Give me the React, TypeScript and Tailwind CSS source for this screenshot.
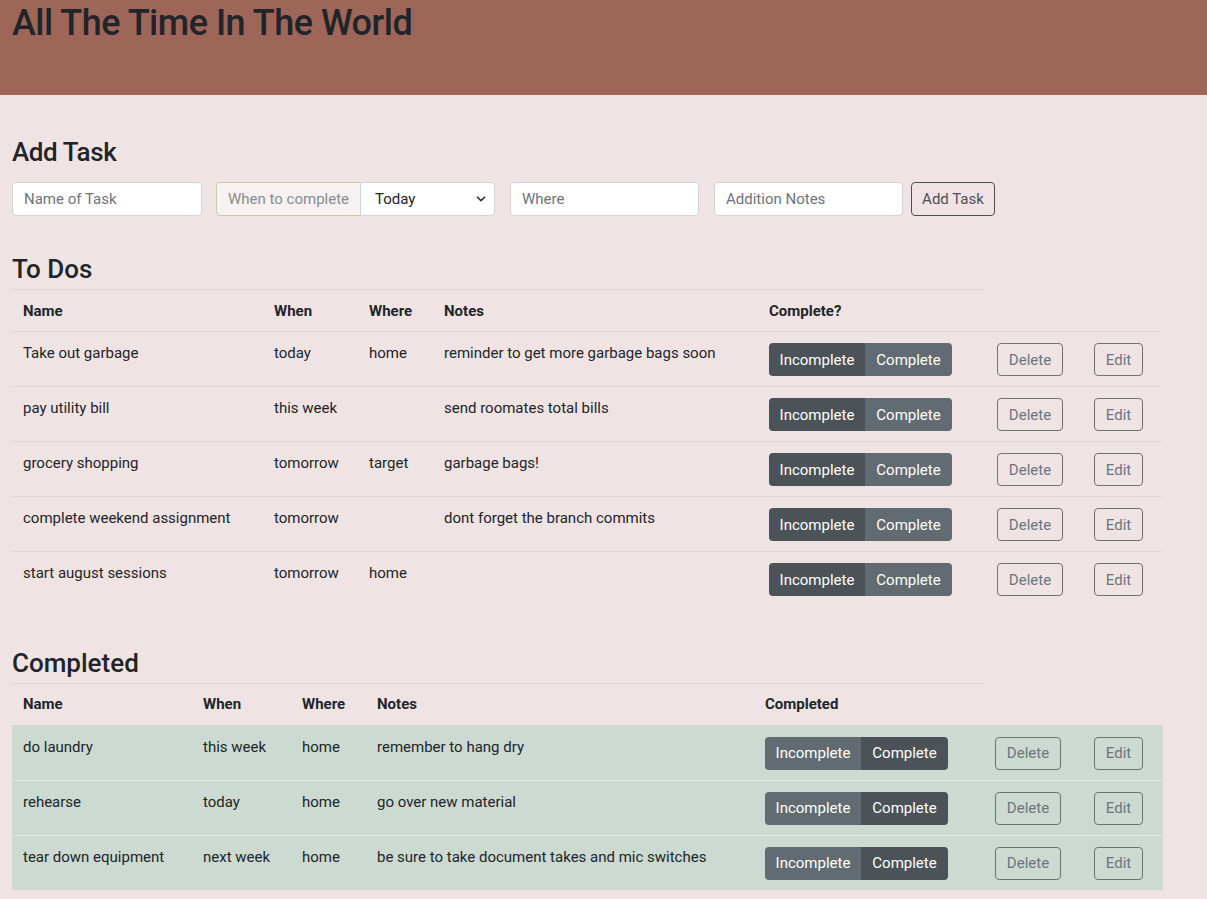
import { ChevronDown } from 'lucide-react';

type Task = { name: string; when: string; where: string; notes: string };

const todos: Task[] = [
  { name: 'Take out garbage', when: 'today', where: 'home', notes: 'reminder to get more garbage bags soon' },
  { name: 'pay utility bill', when: 'this week', where: '', notes: 'send roomates total bills' },
  { name: 'grocery shopping', when: 'tomorrow', where: 'target', notes: 'garbage bags!' },
  { name: 'complete weekend assignment', when: 'tomorrow', where: '', notes: 'dont forget the branch commits' },
  { name: 'start august sessions', when: 'tomorrow', where: 'home', notes: '' },
];

const completed: Task[] = [
  { name: 'do laundry', when: 'this week', where: 'home', notes: 'remember to hang dry' },
  { name: 'rehearse', when: 'today', where: 'home', notes: 'go over new material' },
  { name: 'tear down equipment', when: 'next week', where: 'home', notes: 'be sure to take document takes and mic switches' },
];

function StatusGroup({ done }: { done: boolean }) {
  const dark = 'bg-[#4b5258]';
  const light = 'bg-[#616b71]';
  return (
    <div className="mt-px inline-flex h-[33px] overflow-hidden rounded-[4px] text-white">
      <button className={`w-[96px] ${done ? light : dark}`}>Incomplete</button>
      <button className={`w-[87px] ${done ? dark : light}`}>Complete</button>
    </div>
  );
}

function OutlineButton({ label, width }: { label: string; width: string }) {
  return (
    <button className={`mt-px h-[33px] ${width} rounded-[4px] border border-[#6c7378] text-[#6c757d]`}>
      {label}
    </button>
  );
}

function TaskTable({
  tasks,
  widths,
  lastHeader,
  done,
}: {
  tasks: Task[];
  widths: string[];
  lastHeader: string;
  done: boolean;
}) {
  const cell = 'border-t px-[11px] pt-[10px] text-left align-top';
  const border = done ? 'border-[#dfe5e2]' : 'border-[#dcd8dc]';
  return (
    <table className="w-[1151px] table-fixed border-collapse">
      <colgroup>
        {widths.map((w, i) => (
          <col key={i} className={w} />
        ))}
      </colgroup>
      <thead>
        <tr className="h-[42px]">
          {['Name', 'When', 'Where', 'Notes', lastHeader].map((h) => (
            <th key={h} className="border-t border-[#dcd8dc] px-[11px] text-left align-middle font-bold">
              {h}
            </th>
          ))}
        </tr>
      </thead>
      <tbody>
        {tasks.map((t, i) => {
          const c = `${cell} ${i === 0 && done ? 'border-[#ccdad2]' : border}`;
          return (
            <tr key={i} className={`h-[55px] ${done ? 'bg-[#ccdad2]' : ''}`}>
              <td className={c}>{t.name}</td>
              <td className={c}>{t.when}</td>
              <td className={c}>{t.where}</td>
              <td className={c}>{t.notes}</td>
              <td className={c}>
                <StatusGroup done={done} />
              </td>
              <td className={c}>
                <OutlineButton label="Delete" width="w-[66px]" />
              </td>
              <td className={c}>
                <OutlineButton label="Edit" width="w-[49px]" />
              </td>
            </tr>
          );
        })}
      </tbody>
    </table>
  );
}

export default function App() {
  const input =
    'h-[34px] rounded-[4px] border border-[#ced4da] bg-white px-[11px] text-[#212529] placeholder:text-[#6c757d] outline-none';

  return (
    <div className="min-h-[899px] bg-[#efe4e3] font-['Roboto',sans-serif] text-[15px] leading-[22px] text-[#212529]">
      {/* Header */}
      <header className="h-[95px] bg-[#9e6659] px-3">
        <h1 className="text-[36px] leading-[47px] font-medium tracking-[-0.5px]">All The Time In The World</h1>
      </header>

      <main className="px-3">
        {/* Add Task */}
        <h3 className="mt-[40px] text-[26px] leading-[34px] font-medium tracking-[-0.4px]">Add Task</h3>
        <div className="mt-[13px] flex items-center">
          <input className={`${input} w-[190px]`} placeholder="Name of Task" />
          <div className="ml-[14px] flex">
            <span className="flex h-[34px] w-[145px] items-center whitespace-nowrap rounded-l-[4px] border border-[#c9caa6] bg-[#f7f2f1] px-[11px] text-[#878c90]">
              When to complete
            </span>
            <div className="relative -ml-px flex h-[34px] w-[135px] items-center rounded-r-[4px] border border-[#ced4da] bg-white px-[14px]">
              Today
              <ChevronDown size={14} strokeWidth={3} className="absolute right-[6px] text-[#333]" />
            </div>
          </div>
          <input className={`${input} ml-[15px] w-[189px]`} placeholder="Where" />
          <input className={`${input} ml-[15px] w-[189px]`} placeholder="Addition Notes" />
          <button className="ml-[8px] h-[34px] w-[84px] rounded-[4px] border border-[#4a5056] text-[#495057]">
            Add Task
          </button>
        </div>

        {/* To Dos */}
        <h3 className="mt-[39px] text-[26px] leading-[29px] font-medium">To Dos</h3>
        <div className="mt-[5px]">
          <TaskTable
            tasks={todos}
            widths={['w-[251px]', 'w-[95px]', 'w-[75px]', 'w-[325px]', 'w-[228px]', 'w-[97px]', 'w-[80px]']}
            lastHeader="Complete?"
            done={false}
          />
        </div>

        {/* Completed */}
        <h3 className="mt-[42px] text-[26px] leading-[29px] font-medium">Completed</h3>
        <div className="mt-[5px]">
          <TaskTable
            tasks={completed}
            widths={['w-[180px]', 'w-[99px]', 'w-[75px]', 'w-[388px]', 'w-[230px]', 'w-[99px]', 'w-[80px]']}
            lastHeader="Completed"
            done={true}
          />
        </div>
      </main>
    </div>
  );
}
